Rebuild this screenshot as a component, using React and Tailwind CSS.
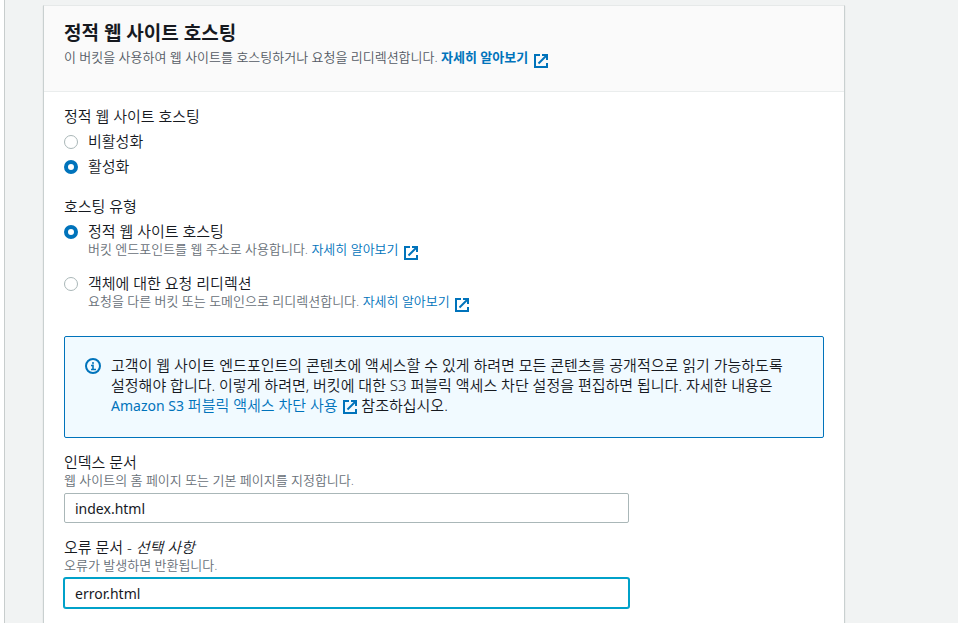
import React, { useState } from "react";

function ExternalIcon({ className = "" }) {
  return (
    <svg
      viewBox="0 0 14 14"
      aria-hidden="true"
      className={"inline h-[14px] w-[14px] " + className}
      fill="none"
      stroke="currentColor"
      strokeWidth="2"
    >
      <path d="M6 1H1v12h12V9" />
      <path d="M8 1h5v5" />
      <path d="M13 1 4.5 9.5" />
    </svg>
  );
}

function InfoIcon() {
  return (
    <svg
      viewBox="0 0 16 16"
      aria-hidden="true"
      className="mt-[3px] h-4 w-4 shrink-0 text-[#0073bb]"
      fill="none"
      stroke="currentColor"
      strokeWidth="2"
    >
      <circle cx="8" cy="8" r="7" />
      <path d="M7 5h2M6 7.5h2M8 6.5V11M6 11.5h5" strokeWidth="1.6" />
    </svg>
  );
}

function LearnMore({ bold }) {
  return (
    <a href="#learn-more" className={bold ? "font-bold text-[#0073bb]" : "text-[#0073bb]"}>
      자세히 알아보기 <ExternalIcon className="-my-2 ml-[2px] align-[2px]" />
    </a>
  );
}

function Radio({ id, name, checked, onChange, label, children }) {
  return (
    <div className="flex gap-[10px]">
      <input
        type="radio"
        id={id}
        name={name}
        checked={checked}
        onChange={onChange}
        className="mt-1 h-[14px] w-[14px] shrink-0 appearance-none rounded-full border border-[#aab7b8] bg-white checked:border-[4px] checked:border-[#0073bb]"
      />
      <div>
        <label htmlFor={id} className="block">
          {label}
        </label>
        {children && <p className="text-[13px] leading-4 text-[#687078]">{children}</p>}
      </div>
    </div>
  );
}

function TextField({ id, label, hint, value, onChange, focused }) {
  return (
    <div>
      <label htmlFor={id} className="block">
        {label}
      </label>
      <p id={id + "-hint"} className="text-[13px] leading-4 text-[#687078]">
        {hint}
      </p>
      <input
        id={id}
        type="text"
        aria-describedby={id + "-hint"}
        value={value}
        onChange={(e) => onChange(e.target.value)}
        className={
          "mt-[5px] block h-[30px] w-full max-w-[565px] rounded-[2px] border bg-white px-[10px] text-[14px] font-normal text-[#16191f] outline-none " +
          (focused ? "border-[#00a1c9] shadow-[0_0_0_1px_#00a1c9]" : "border-[#aab7b8]")
        }
      />
    </div>
  );
}

export default function App() {
  const [hosting, setHosting] = useState("on");
  const [type, setType] = useState("static");
  const [index, setIndex] = useState("index.html");
  const [error, setError] = useState("error.html");

  return (
    <div className="flex min-h-screen bg-white pl-1 font-['Noto_Sans','Noto_Sans_CJK_KR',sans-serif] text-[15px] leading-5 font-[350] break-keep text-[#16191f]">
      <main className="flex flex-1 border-l border-[#c8cdcd] bg-[#f1f3f3] pt-[5px] pr-[113px] pl-[38px]">
        <section className="flex-1 border-x border-t border-x-[#c9d0d0] border-t-[#e6e9e9] bg-white shadow-[0_1px_1px_0_rgba(0,28,36,0.15)]">
          <header className="h-[86px] border-b border-[#eaeded] bg-[#fafafa] px-5 pt-[15px]">
            <h2 className="text-[19px] leading-6 font-bold">정적 웹 사이트 호스팅</h2>
            <p className="mt-1 text-[13px] leading-4 text-[#545b64]">
              이 버킷을 사용하여 웹 사이트를 호스팅하거나 요청을 리디렉션합니다. <LearnMore bold />
            </p>
          </header>

          <div className="px-5 pt-[14px] pb-[14px]">
            <fieldset>
              <legend>정적 웹 사이트 호스팅</legend>
              <div className="mt-[5px] flex flex-col gap-[5px]">
                <Radio
                  id="hosting-off"
                  name="hosting"
                  label="비활성화"
                  checked={hosting === "off"}
                  onChange={() => setHosting("off")}
                />
                <Radio
                  id="hosting-on"
                  name="hosting"
                  label="활성화"
                  checked={hosting === "on"}
                  onChange={() => setHosting("on")}
                />
              </div>
            </fieldset>

            <fieldset className="mt-5">
              <legend>호스팅 유형</legend>
              <div className="mt-[5px] flex flex-col gap-4">
                <Radio
                  id="type-static"
                  name="type"
                  label="정적 웹 사이트 호스팅"
                  checked={type === "static"}
                  onChange={() => setType("static")}
                >
                  버킷 엔드포인트를 웹 주소로 사용합니다. <LearnMore />
                </Radio>
                <Radio
                  id="type-redirect"
                  name="type"
                  label="객체에 대한 요청 리디렉션"
                  checked={type === "redirect"}
                  onChange={() => setType("redirect")}
                >
                  요청을 다른 버킷 또는 도메인으로 리디렉션합니다. <LearnMore />
                </Radio>
              </div>
            </fieldset>

            <div className="mt-[27px] flex gap-[10px] rounded-[2px] border border-[#0073bb] bg-[#f1faff] px-5 pt-[18px] pb-[22px]">
              <InfoIcon />
              <p>
                고객이 웹 사이트 엔드포인트의 콘텐츠에 액세스할 수 있게 하려면 모든 콘텐츠를 공개적으로 읽기 가능하도록
                설정해야 합니다. 이렇게 하려면, 버킷에 대한 S3 퍼블릭 액세스 차단 설정을 편집하면 됩니다. 자세한 내용은{" "}
                <a href="#block-public-access" className="text-[#0073bb]">
                  <span className="text-[14px] leading-4 font-normal">Amazon S3</span> 퍼블릭 액세스 차단 사용{" "}
                  <ExternalIcon className="-my-1 ml-[2px] align-[1px]" />
                </a>{" "}
                참조하십시오.
              </p>
            </div>

            <div className="mt-[14px] flex flex-col gap-[14px]">
              <TextField
                id="index-document"
                label="인덱스 문서"
                hint="웹 사이트의 홈 페이지 또는 기본 페이지를 지정합니다."
                value={index}
                onChange={setIndex}
              />
              <TextField
                id="error-document"
                label={
                  <>
                    오류 문서 - <i>선택 사항</i>
                  </>
                }
                hint="오류가 발생하면 반환됩니다."
                value={error}
                onChange={setError}
                focused
              />
            </div>
          </div>
        </section>
      </main>
    </div>
  );
}
